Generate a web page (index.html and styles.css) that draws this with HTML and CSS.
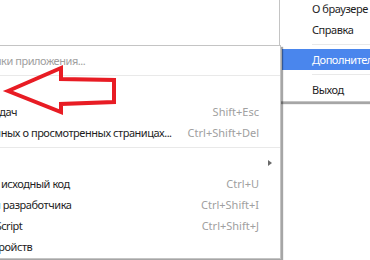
FILE: index.html
```html
<!DOCTYPE html>
<html lang="ru">
<head>
    <meta charset="UTF-8">
    <meta name="viewport" content="width=device-width, initial-scale=1.0">
    <title>Дополнительные инструменты</title>
    <link rel="stylesheet" href="styles.css">
</head>
<body>
    <div class="screen">
        <div class="menu main-menu">
            <div class="item">О браузере</div>
            <div class="item">Справка</div>
            <div class="sep"></div>
            <div class="item active">Дополнительные инструменты</div>
            <div class="sep"></div>
            <div class="item">Выход</div>
        </div>

        <div class="menu sub-menu">
            <div class="item disabled"><span class="label">Создать ярлыки приложения...</span><span class="keys"></span><span class="more"></span></div>
            <div class="sep"></div>
            <div class="item"><span class="label">Расширения</span><span class="keys"></span><span class="more"></span></div>
            <div class="item"><span class="label">Диспетчер задач</span><span class="keys">Shift+Esc</span><span class="more"></span></div>
            <div class="item"><span class="label">Удаление данных о просмотренных страницах...</span><span class="keys">Ctrl+Shift+Del</span><span class="more"></span></div>
            <div class="sep"></div>
            <div class="item"><span class="label">Кодировка</span><span class="keys"></span><span class="more"><i class="tri"></i></span></div>
            <div class="item"><span class="label">Просмотреть исходный код</span><span class="keys">Ctrl+U</span><span class="more"></span></div>
            <div class="item"><span class="label">Инструменты разработчика</span><span class="keys">Ctrl+Shift+I</span><span class="more"></span></div>
            <div class="item"><span class="label">Консоль JavaScript</span><span class="keys">Ctrl+Shift+J</span><span class="more"></span></div>
            <div class="item"><span class="label">Проверка устройств</span><span class="keys"></span><span class="more"></span></div>
        </div>

        <!-- red pointer drawn over the menus -->
        <svg class="pointer" width="370" height="260" viewBox="0 0 370 260">
            <polygon points="8,91 61,68 61,79 114,80 114,102 61,104 61,112"
                     fill="none" stroke="#e81c24" stroke-width="4" stroke-linejoin="miter"/>
        </svg>
    </div>
</body>
</html>
```

FILE: styles.css
```css
* {
    margin: 0;
    padding: 0;
    box-sizing: border-box;
}

body {
    background: #fff;
    font-family: 'Noto Sans', 'Open Sans', sans-serif;
    font-size: 11px;
    color: #1e1e1e;
}

.screen {
    position: relative;
    width: 370px;
    height: 260px;
    overflow: hidden;
    background: #fff;
}

.menu {
    position: absolute;
    background: #fff;
    border: 1px solid #c4c4c4;
    box-shadow: 2px 2px 1px rgba(0, 0, 0, 0.35);
    white-space: nowrap;
}

.item {
    height: 21px;
    line-height: 21px;
}

.sep {
    height: 1px;
    margin: 4px 0;
    background: #e9e9e9;
}

/* main browser menu */
.main-menu {
    left: 279px;
    top: -7px;
    width: 200px;
    padding: 4px 0 1px 2px;
    z-index: 1;
}

.main-menu .item {
    padding-left: 30px;
    letter-spacing: -0.45px;
}

.main-menu .item.active {
    background: #4a86ed;
    color: #fff;
}

.main-menu .sep {
    margin-left: 30px;
}

/* "more tools" submenu */
.sub-menu {
    left: -120px;
    top: 45px;
    width: 401px;
    padding: 4px 0 1px;
    z-index: 2;
}

.sub-menu .item {
    display: flex;
    padding-left: 52px;
}

.sub-menu .label {
    flex: 1;
    letter-spacing: -0.45px;
}

.sub-menu .keys {
    color: #a0a0a0;
}

.sub-menu .more {
    width: 21px;
    display: flex;
    align-items: center;
    justify-content: center;
}

.sub-menu .disabled {
    color: #a0a0a0;
}

.tri {
    display: block;
    width: 0;
    height: 0;
    border-left: 4px solid #6a6a6a;
    border-top: 3.5px solid transparent;
    border-bottom: 3.5px solid transparent;
}

.pointer {
    position: absolute;
    left: 0;
    top: 0;
    z-index: 3;
}
```
